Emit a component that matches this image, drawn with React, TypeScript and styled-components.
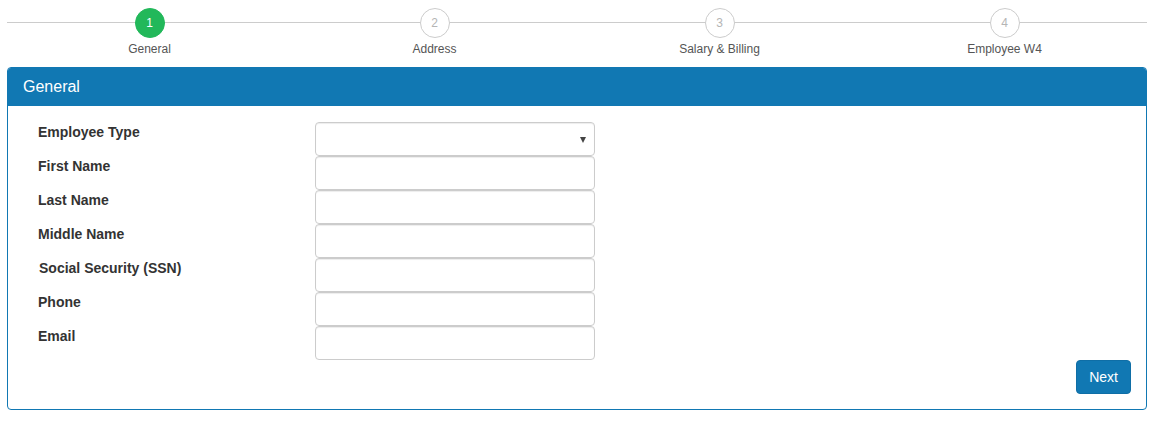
import React from 'react';
import styled, { createGlobalStyle } from 'styled-components';

const GlobalStyle = createGlobalStyle`
    body {
        margin: 0;
        background: #ffffff;
        font-family: "Liberation Sans", Arial, sans-serif;
        color: #333333;
    }
`;

const Page = styled.div`
    width: 1140px;
    margin-left: 7px;
`;

const Stepper = styled.div`
    position: relative;
    display: grid;
    grid-template-columns: repeat(4, 1fr);
    padding-top: 8px;
    margin-bottom: 10px;

    &::before {
        content: '';
        position: absolute;
        left: 0;
        right: 0;
        top: 22px;
        height: 1px;
        background: #cccccc;
    }
`;

const Step = styled.div`
    display: flex;
    flex-direction: column;
    align-items: center;
    position: relative;
`;

const Circle = styled.div<{ $active?: boolean }>`
    box-sizing: border-box;
    width: 30px;
    height: 30px;
    border-radius: 50%;
    display: flex;
    align-items: center;
    justify-content: center;
    font-size: 12px;
    background: ${({ $active }) => ($active ? '#22b85a' : '#ffffff')};
    color: ${({ $active }) => ($active ? '#ffffff' : '#b5b5b5')};
    border: 1px solid ${({ $active }) => ($active ? '#22b85a' : '#cccccc')};
`;

const StepLabel = styled.div`
    margin-top: 3px;
    font-size: 12px;
    line-height: 16px;
    color: #555555;
`;

const Panel = styled.div`
    border: 1px solid #1178b3;
    border-radius: 4px;
    overflow: hidden;
`;

const PanelHeader = styled.div`
    background: #1178b3;
    color: #ffffff;
    font-size: 16px;
    line-height: 18px;
    padding: 10px 15px 10px;
`;

const PanelBody = styled.div`
    padding: 16px 15px 15px 30px;
`;

const FormRow = styled.div`
    display: grid;
    grid-template-columns: 277px 280px;
`;

const Label = styled.label<{ $shift?: boolean }>`
    font-size: 14px;
    font-weight: bold;
    line-height: 20px;
    color: #333333;
    padding-left: ${({ $shift }) => ($shift ? '1px' : '0')};
`;

const Input = styled.input`
    box-sizing: border-box;
    width: 280px;
    height: 34px;
    border: 1px solid #cccccc;
    border-radius: 4px;
    padding: 6px 12px;
    font-size: 14px;
    font-family: inherit;
    box-shadow: inset 0 1px 1px rgba(0, 0, 0, 0.075);
    outline: none;
`;

const SelectBox = styled.div`
    box-sizing: border-box;
    width: 280px;
    height: 34px;
    border: 1px solid #cccccc;
    border-radius: 4px;
    display: flex;
    align-items: center;
    justify-content: flex-end;
    padding-right: 8px;
    box-shadow: inset 0 1px 1px rgba(0, 0, 0, 0.075);
`;

const Caret = styled.span`
    width: 0;
    height: 0;
    border-left: 3px solid transparent;
    border-right: 3px solid transparent;
    border-top: 6px solid #444444;
    margin-top: 1px;
`;

const Actions = styled.div`
    display: flex;
    justify-content: flex-end;
`;

const Button = styled.button`
    height: 34px;
    padding: 6px 12px;
    background: #1178b3;
    color: #ffffff;
    border: 1px solid #0f6ea6;
    border-radius: 4px;
    font-size: 14px;
    font-family: inherit;
    cursor: pointer;
`;

const steps = ['General', 'Address', 'Salary & Billing', 'Employee W4'];
const fields = ['First Name', 'Last Name', 'Middle Name', 'Social Security (SSN)', 'Phone', 'Email'];

const App = () => (
    <Page>
        <GlobalStyle />
        <Stepper>
            {steps.map((s, i) => (
                <Step key={s}>
                    <Circle $active={i === 0}>{i + 1}</Circle>
                    <StepLabel>{s}</StepLabel>
                </Step>
            ))}
        </Stepper>
        <Panel>
            <PanelHeader>General</PanelHeader>
            <PanelBody>
                <FormRow>
                    <Label>Employee Type</Label>
                    <SelectBox><Caret /></SelectBox>
                </FormRow>
                {fields.map((f) => (
                    <FormRow key={f}>
                        <Label $shift={f.startsWith('Social')}>{f}</Label>
                        <Input />
                    </FormRow>
                ))}
                <Actions>
                    <Button>Next</Button>
                </Actions>
            </PanelBody>
        </Panel>
    </Page>
);

export default App;
